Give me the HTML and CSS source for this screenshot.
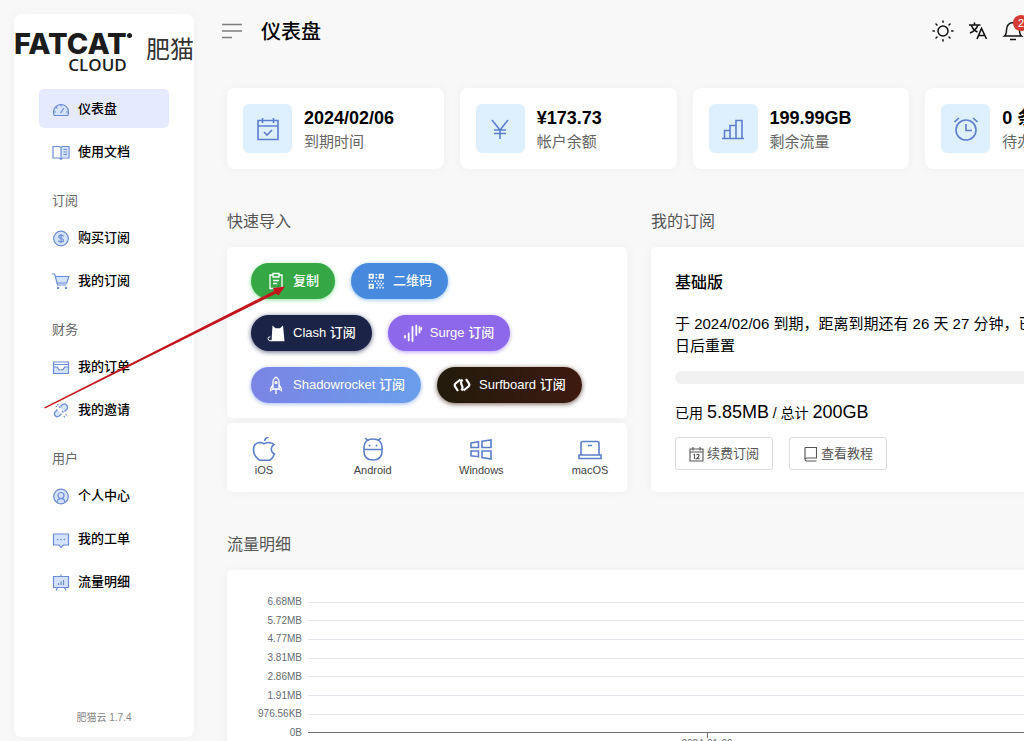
FILE: index.html
```html
<!DOCTYPE html>
<html lang="zh-CN">
<head>
<meta charset="utf-8">
<meta name="viewport" content="width=device-width, initial-scale=1">
<title>仪表盘</title>
<link rel="stylesheet" href="styles.css">
</head>
<body>
<div class="app">
  <aside class="sidebar">
    <div class="logo">
      <div class="logo-mark">
        <span class="logo-top">FATCAT</span>
        <span class="logo-bottom">CLOUD</span>
      </div>
      <span class="logo-cn">肥猫</span>
    </div>
    <nav class="nav">
      <a class="nav-item active" href="#dashboard">
        <svg class="duo" viewBox="0 0 18 18"><path class="f" d="M1.500 15.500V12a7.500 7.500 0 0 1 15 0v3.500z"/><path d="M2.300 15.500Q1.500 14 1.500 12a7.500 7.500 0 0 1 15 0q0 2-.8 3.500zM8.500 13l3.500-5M9 4.500v2M4 7l1.300 1.300M2 12h2M14 12h2"/></svg>
        <span>仪表盘</span></a>
      <a class="nav-item" href="#docs">
        <svg class="duo" viewBox="0 0 18 18"><path class="f" d="M9 4h7.500v10H9z"/><path d="M1 3.500H7.500L9 4.500l1.500-1H17v11.500h-6.500L9 16.500 7.500 15H1zM9 4.500V16.500M11.500 6.500h3.500M11.500 9h3.500M11.500 11.500h3.500"/></svg>
        <span>使用文档</span></a>
      <div class="nav-group">订阅</div>
      <a class="nav-item" href="#buy">
        <svg class="duo" viewBox="0 0 18 18"><circle class="f" cx="9" cy="9.500" r="7.300"/><circle cx="9" cy="9.500" r="7.300"/><path d="M11.500 7.500Q11 6.200 9 6.200T6.600 7.800Q6.600 9.100 9 9.500t2.500 1.800Q11.500 12.900 9 12.900T6.500 11.500M9 5v9"/></svg>
        <span>购买订阅</span></a>
      <a class="nav-item" href="#subs">
        <svg class="duo" viewBox="0 0 18 18"><path class="f" d="M3.500 5H16.500L14.500 12H5.500z"/><path d="M0 2H2.700L5.500 13H14.500M3.500 4.500H16.800L14.800 11H5"/><circle class="dot" cx="6" cy="16" r="1.200"/><circle class="dot" cx="14" cy="16" r="1.200"/></svg>
        <span>我的订阅</span></a>
      <div class="nav-group">财务</div>
      <a class="nav-item" href="#orders">
        <svg class="duo" viewBox="0 0 18 18"><path class="f" d="M1.500 9H5.500Q6 12 9 12t3.500-3h4v6.500h-15z"/><path d="M1.500 4h15v11.500h-15zM1.500 6.500h15M1.500 9H5.500Q6 12 9 12t3.500-3h4"/></svg>
        <span>我的订单</span></a>
      <a class="nav-item" href="#invite">
        <svg class="duo" viewBox="0 0 18 18"><path class="f" d="M8 6l3-3 4.500 1v3.500l-3 3-2-1zM2.500 12l3-3 4 3.500-2.500 3.500H3.500z"/><path d="M8.500 5.500l2-2q2-1.500 4 .5t.5 4l-2.500 2.500M5.500 8.500L3 11q-1.500 2 .3 3.800t3.800.3L9.500 13M7 5.500l1.500 1.500M10 10l1.500 1.500M3.500 5l1.500.7M5.500 3l.7 1.500M13.500 13.500l1.500.7M12 15l.5 1.700"/></svg>
        <span>我的邀请</span></a>
      <div class="nav-group">用户</div>
      <a class="nav-item" href="#profile">
        <svg class="duo" viewBox="0 0 18 18"><circle class="f" cx="9" cy="9.500" r="7.300"/><circle cx="9" cy="9.500" r="7.300"/><circle cx="9" cy="8.500" r="3"/><path d="M5 15.500Q5.500 11.700 9 11.700T13 15.500"/></svg>
        <span>个人中心</span></a>
      <a class="nav-item" href="#tickets">
        <svg class="duo" viewBox="0 0 18 18"><path class="f" d="M1.500 4h15v11h-5L9 17.500 7 15H1.500z"/><path d="M1.500 4h15v11h-5L9 17.500 7 15H1.500z"/><circle class="dot" cx="5.700" cy="9.500" r=".8"/><circle class="dot" cx="9" cy="9.500" r=".8"/><circle class="dot" cx="12.300" cy="9.500" r=".8"/></svg>
        <span>我的工单</span></a>
      <a class="nav-item" href="#traffic">
        <svg class="duo" viewBox="0 0 18 18"><path class="f" d="M1.500 3.500h15v11h-15z"/><path d="M1.500 3.500h15v11h-15zM9 3.500v-2M5.500 14.500l-1.500 3M12.500 14.500l1.500 3M6.500 12v-2M9 12V8.500M11.500 12V7"/></svg>
        <span>流量明细</span></a>
    </nav>
    <div class="version">肥猫云 1.7.4</div>
  </aside>

  <main class="main">
    <header class="header">
      <button class="icon-btn" type="button" aria-label="菜单">
        <svg width="22" height="22" viewBox="0 0 22 22" fill="none" stroke="#7d7d7d" stroke-width="1.500"><path d="M1 4.500h20M1 11h20M1 17.500h10"/></svg>
      </button>
      <h1>仪表盘</h1>
    </header>

    <section class="stats">
      <article class="stat">
        <span class="stat-icon"><svg viewBox="0 0 24 24"><path d="M2 3.500h20v19H2zM2 9h20M6.500 1v5M17.500 1v5M8 15l3 3 5-5"/></svg></span>
        <div><strong>2024/02/06</strong><p>到期时间</p></div>
      </article>
      <article class="stat">
        <span class="stat-icon"><svg viewBox="0 0 24 24"><path d="M4 3l8 10 8-10M12 13v9M6 13h12M6 16.500h12"/></svg></span>
        <div><strong>¥173.73</strong><p>帐户余额</p></div>
      </article>
      <article class="stat">
        <span class="stat-icon"><svg viewBox="0 0 24 24"><path d="M1 21.500h22M3.500 21.500v-8H9M9 21.500v-13h6M15 21.500v-18h6v18M9 13.500v8M15 8.500v13"/></svg></span>
        <div><strong>199.99GB</strong><p>剩余流量</p></div>
      </article>
      <article class="stat">
        <span class="stat-icon"><svg viewBox="0 0 24 24"><circle cx="12" cy="13" r="10"/><path d="M12 7v6.500h6M.5 5L5 1M23.500 5L19 1"/></svg></span>
        <div><strong>0 条</strong><p>待办</p></div>
      </article>
    </section>

    <div class="columns">
      <section>
        <h2>快速导入</h2>
        <div class="import card">
          <div class="pill-row">
            <button class="pill copy" type="button">
              <svg viewBox="0 0 18 18" fill="none" stroke="#fff" stroke-width="1.300"><path d="M6 3H3v13.500h12V3h-3M6 1.500h6v3.500H6zM6 8.500h6M6 11.500h4"/></svg><span>复制</span></button>
            <button class="pill qr" type="button">
              <svg viewBox="0 0 18 18" fill="none" stroke="#fff" stroke-width="1.600"><path d="M2.500 2.500h3.500v3.500H2.500zM12.500 2.500h3.500v3.500h-3.500zM2.500 12.500h3.500v3.500H2.500z"/><path stroke-dasharray="1.500 1.500" d="M9.300 2v5M1.500 9.300h15M9.300 11.500h7.500M10.800 13.500h6M9.300 15.700h7.500"/></svg><span>二维码</span></button>
          </div>
          <div class="pill-row">
            <button class="pill clash" type="button">
              <svg viewBox="0 0 18 18"><path fill="#fff" d="M5.500 1.500L8.500 4.200h4.500L16 1.500 17.500 17.300H4.500z"/><path fill="none" stroke="#fff" d="M5 16.800Q1 17.500 1 14.500 1 12.800 3.300 12.800"/></svg><span>Clash 订阅</span></button>
            <button class="pill surge" type="button">
              <svg viewBox="0 0 18 18" fill="none" stroke="#fff" stroke-width="1.800" stroke-linecap="round"><path d="M1 12v1.500M4.700 9.500v7M8.500 3v14M12.300 1.500v9.500M15.500 3v5.500M17.500 4v1.500"/></svg><span>Surge 订阅</span></button>
          </div>
          <div class="pill-row">
            <button class="pill rocket" type="button">
              <svg viewBox="0 0 18 18" fill="none" stroke="#fff" stroke-width="1.300"><path d="M6 13V6q0-3 3-5 3 2 3 5v7zM6 8.500L3.500 13v1.500L6 13M12 8.500l2.500 4.500v1.500L12 13M9 13v5"/><circle cx="9" cy="6.500" r="1"/></svg><span>Shadowrocket 订阅</span></button>
            <button class="pill surfboard" type="button">
              <svg viewBox="0 0 18 18" fill="none" stroke="#fff" stroke-width="2.600"><path d="M7.500 3.500L2.500 7.500Q1 9 2.300 10.900L5 15M10.500 14.500l5-4q1.500-1.500.2-3.400L13 3M9.500 3.500Q7 6 8.700 9T8.500 14.500" stroke-width="2.200"/></svg><span>Surfboard 订阅</span></button>
          </div>
        </div>
        <div class="platforms card">
          <a href="#ios"><svg viewBox="0 0 24 24"><path d="M22 7.500q-3.500 2.500-2.500 6 .5 2.500 3 3.500-1.500 4-4.500 6.200H7.500Q1.500 19 1.500 12.500 1.800 6 7.500 5.500q2 0 4.500 1.200Q15 5.500 17 5.500q3.500.3 5 2zM12.500 4q.5-3 4-4"/></svg>iOS</a>
          <a href="#android"><svg viewBox="0 0 24 24"><path d="M3 12.500V10Q3.500 2 12 2t9 8v5q-.5 8-9 8t-9-8zM3 12.500h18M4 1l3 2.500M20 1l-3 2.500"/><circle class="eye" cx="8.500" cy="8.500" r="1"/><circle class="eye" cx="15.500" cy="8.500" r="1"/></svg>Android</a>
          <a href="#windows"><svg viewBox="0 0 24 24"><path d="M2 6l7.500-1.200v5.700H2zM13 4.200L22 3v7.500h-9zM2 14h7.500v5.700L2 18.800zM13 14h9v8l-9-1.500z"/></svg>Windows</a>
          <a href="#macos"><svg viewBox="0 0 24 24"><path d="M3 18V6q0-1.500 1.500-1.500h15q1.500 0 1.500 1.500v12M1 18h22v3.500H1zM10 8.500h4"/></svg>macOS</a>
        </div>
      </section>

      <section>
        <h2>我的订阅</h2>
        <div class="plan card">
          <h3>基础版</h3>
          <p class="plan-text">于 2024/02/06 到期，距离到期还有 26 天 27 分钟，已<br>日后重置</p>
          <div class="bar" role="progressbar" aria-label="已用流量" aria-valuenow="0" aria-valuemin="0" aria-valuemax="100"></div>
          <p class="usage">已用 <span>5.85MB</span> / 总计 <span>200GB</span></p>
          <div class="plan-actions">
            <button type="button"><svg viewBox="0 0 15 16"><path d="M1 3h13v12H1zM1 6h13M4 1v3.500M11 1v3.500M4.500 9l1-.5V13M7.500 9q2-1.500 2.500 0T7.500 12.700h3"/></svg><span>续费订阅</span></button>
            <button type="button"><svg viewBox="0 0 15 16"><path d="M2 1.500H13.500V12H3.500Q2 12 2 13.300T3.500 15H13.500M2 13.500V1.500"/></svg><span>查看教程</span></button>
          </div>
        </div>
      </section>
    </div>

    <section>
      <h2>流量明细</h2>
      <div class="chart card">
        <div class="axis">
          <div class="tick"><span>6.68MB</span></div>
          <div class="tick"><span>5.72MB</span></div>
          <div class="tick"><span>4.77MB</span></div>
          <div class="tick"><span>3.81MB</span></div>
          <div class="tick"><span>2.86MB</span></div>
          <div class="tick"><span>1.91MB</span></div>
          <div class="tick"><span>976.56KB</span></div>
          <div class="tick base"><span>0B</span></div>
        </div>
        <div class="dates"><span>2024-01-09</span></div>
      </div>
    </section>
  </main>

  <div class="tools">
    <button class="icon-btn" type="button" aria-label="主题">
      <svg width="22" height="22" viewBox="0 0 22 22" fill="none" stroke="#111" stroke-width="1.500"><circle cx="11" cy="11" r="5"/><path stroke-linecap="round" d="M11 1v1.300M11 19.700V21M1 11h1.300M19.700 11H21M4 4l1 1M17 17l1 1M4 18l1-1M17 5l1-1"/></svg>
    </button>
    <button class="icon-btn" type="button" aria-label="语言">
      <svg width="22" height="22" viewBox="0 0 22 22" fill="none" stroke="#111" stroke-width="1.600"><path d="M2 5h11.500M7.500 2.500V5M11 5Q9 10.500 3 13M4.500 5.500Q6 10 10.500 12M10 19l4.500-10.500L19.500 19M11.500 15.500h6.500"/></svg>
    </button>
    <button class="icon-btn bell" type="button" aria-label="通知">
      <svg width="22" height="22" viewBox="0 0 22 22" fill="none" stroke="#111" stroke-width="1.500"><path d="M2.500 16h17Q17.500 14.500 17.500 9.500 17 3 11 2.500 5 3 4.500 9.500 4.500 14.500 2.500 16zM8 19.500h6"/></svg>
      <span class="badge">2</span>
    </button>
  </div>

  <svg class="pointer" width="244" height="124" viewBox="0 0 244 124" aria-hidden="true"><path fill="#c1161d" d="M0 121.400L230 5 229 2 241 0.500 234.500 9.500 232 7.600 1 122.600z"/></svg>
</div>
</body>
</html>
```
FILE: styles.css
```css
* {
  box-sizing: border-box;
}

body {
  margin: 0;
  background: #f8f8f8;
  color: #000;
  font-family: "Liberation Sans", "Noto Sans CJK SC", sans-serif;
  font-size: 13px;
  overflow: hidden;
}

h1, h2, h3, p {
  margin: 0;
}

button {
  font: inherit;
  cursor: pointer;
}

a {
  color: inherit;
  text-decoration: none;
}

.app {
  position: relative;
  display: flex;
  gap: 33px;
  height: 100vh;
  padding-left: 14px;
  overflow: hidden;
}

.card,
.stat,
.sidebar {
  background: #fff;
  box-shadow: 0 0 12px rgba(0, 0, 0, 0.04);
}

/* Sidebar */
.sidebar {
  display: flex;
  flex: 0 0 180px;
  flex-direction: column;
  margin: 14px 0 4px;
  border-radius: 8px;
}

.logo {
  display: flex;
  align-items: flex-start;
  justify-content: space-between;
  height: 75px;
  padding-top: 17px;
  color: #1c1c1c;
}

.logo-mark {
  position: relative;
  display: flex;
  flex-direction: column;
}

.logo-mark::after {
  position: absolute;
  top: 2px;
  right: -5px;
  width: 5px;
  height: 5px;
  border-radius: 50%;
  background: #1c1c1c;
  content: "";
}

.logo-top {
  font-family: Inter, sans-serif;
  font-size: 29px;
  font-weight: 800;
  line-height: 26px;
}

.logo-bottom {
  align-self: flex-end;
  font-family: "Open Sans", sans-serif;
  font-size: 17px;
  font-weight: 600;
  line-height: 16px;
}

.logo-cn {
  color: #333;
  font-size: 24px;
  line-height: 38px;
}

.nav {
  display: flex;
  flex: 1;
  flex-direction: column;
  gap: 4px;
  padding: 0 25px;
}

.nav-item {
  display: flex;
  align-items: center;
  gap: 8px;
  height: 39px;
  padding-left: 13px;
  border-radius: 5px;
  font-weight: 500;
}

.nav-item span,
.pill span,
.plan-actions span {
  padding-bottom: 3px;
}

.nav-item.active {
  background: #e6eafe;
}

.nav-group {
  height: 39px;
  padding: 16px 0 0 13px;
  color: #666;
  line-height: 20px;
}

.duo {
  width: 18px;
  height: 18px;
  fill: none;
  stroke: #6c8cd4;
  stroke-width: 1.2;
}

.duo .f {
  fill: #d5e2fc;
  stroke: none;
}

.duo .dot {
  fill: #6c8cd4;
  stroke: none;
}

.version {
  padding-bottom: 11px;
  color: #888;
  font-size: 10px;
  line-height: 16px;
  text-align: center;
}

/* The content column runs past the right edge of the window */
.main {
  flex: 1;
  min-width: 0;
  margin-right: -118px;
}

.header {
  display: flex;
  align-items: center;
  gap: 18px;
  height: 62px;
  margin: 0 0 26px -6px;
}

.header h1 {
  padding-bottom: 2px;
  font-size: 20px;
  font-weight: 500;
}

.icon-btn {
  display: flex;
  padding: 0;
  border: 0;
  background: none;
}

.tools {
  position: absolute;
  top: 20px;
  right: 0;
  display: flex;
  gap: 13px;
}

.bell {
  position: relative;
}

.badge {
  position: absolute;
  top: -5px;
  left: 11px;
  width: 16px;
  height: 16px;
  border-radius: 8px;
  background: #d63a34;
  color: #fff;
  font-size: 11px;
  line-height: 16px;
  text-align: center;
}

/* Summary cards */
.stats {
  display: grid;
  grid-template-columns: repeat(4, minmax(0, 1fr));
  gap: 16px;
}

.stat {
  display: flex;
  align-items: center;
  gap: 12px;
  padding: 16px;
  border-radius: 8px;
}

.stat-icon {
  display: flex;
  align-items: center;
  justify-content: center;
  width: 49px;
  height: 49px;
  border-radius: 6px;
  background: #def0fd;
}

.stat-icon svg,
.platforms svg {
  width: 24px;
  height: 24px;
  fill: none;
  stroke: #5d7ecb;
  stroke-width: 1.6;
}

.stat strong {
  display: block;
  font-size: 18px;
  line-height: 26px;
}

.stat p {
  color: #666;
  font-size: 15px;
  line-height: 22px;
}

h2 {
  margin: 41px 0 13px;
  color: #555;
  font-size: 16px;
  font-weight: 400;
  line-height: 24px;
}

.columns {
  display: grid;
  grid-template-columns: minmax(0, 400fr) minmax(0, 491fr);
  gap: 24px;
}

.columns > section {
  display: flex;
  flex-direction: column;
}

.card {
  border-radius: 5px;
}

/* Quick import */
.import {
  display: flex;
  flex-direction: column;
  gap: 16px;
  padding: 16px 24px 15px;
}

.pill-row {
  display: flex;
  gap: 16px;
}

.pill {
  display: flex;
  align-items: center;
  gap: 8px;
  height: 36px;
  padding: 0 16px;
  border: 0;
  border-radius: 18px;
  color: #fff;
  font-weight: 500;
}

.pill svg {
  width: 18px;
  height: 18px;
}

.copy {
  background: #35a745;
  box-shadow: 0 1px 4px #8be29a;
}

.qr {
  background: #4789dc;
  box-shadow: 0 1px 4px #8fc0f8;
}

.clash {
  background: #1b2346;
  box-shadow: 0 1px 5px #5a6180;
}

.surge {
  background: #8d68ea;
  box-shadow: 0 1px 4px #b79ef8;
}

.rocket {
  background: linear-gradient(90deg, #7b84e4, #6a9eeb);
  box-shadow: 0 1px 4px #9eb8f5;
}

.surfboard {
  background: linear-gradient(90deg, #221b0b, #3d1a10);
  box-shadow: 0 1px 5px #70584f;
}

.platforms {
  display: flex;
  justify-content: space-between;
  margin-top: 5px;
  padding: 14px 8px 13px;
}

.platforms a {
  display: flex;
  flex-direction: column;
  align-items: center;
  gap: 1px;
  width: 58px;
  color: #444;
  font-size: 11px;
  line-height: 17px;
}

.platforms .eye {
  fill: #5d7ecb;
  stroke: none;
}

/* Current plan */
.plan {
  flex: 1;
  padding: 24px 24px 20px;
}

.plan h3 {
  font-size: 16px;
  font-weight: 500;
  line-height: 24px;
}

.plan-text {
  margin-top: 18px;
  font-size: 15px;
  line-height: 22px;
}

.bar {
  height: 13px;
  margin-top: 14px;
  border-radius: 7px;
  background: #f0f0f0;
}

.usage {
  margin-top: 16px;
  font-size: 14px;
  line-height: 24px;
}

.usage span {
  font-size: 18px;
}

.plan-actions {
  display: flex;
  gap: 16px;
  margin-top: 12px;
}

.plan-actions button {
  display: flex;
  align-items: center;
  gap: 3px;
  height: 33px;
  padding: 0 13px;
  border: 1px solid #dcdcdc;
  border-radius: 3px;
  background: #fff;
  color: #555;
}

.plan-actions svg {
  width: 15px;
  height: 16px;
  fill: none;
  stroke: #555;
  stroke-width: 1.1;
}

/* Traffic chart */
.chart {
  padding: 23px 36px 24px 24px;
}

.axis {
  display: flex;
  flex-direction: column;
  justify-content: space-between;
  height: 149px;
}

.tick {
  display: flex;
  align-items: center;
  gap: 6px;
  color: #666b73;
  font-size: 10px;
  line-height: 18px;
}

.tick span {
  width: 51px;
  text-align: right;
}

.tick::after {
  flex: 1;
  height: 1px;
  background: #e3e5ea;
  content: "";
}

.tick.base::after {
  background: #6e7079;
}

.dates {
  display: flex;
  flex-direction: column;
  align-items: center;
  margin: -9px 0 0 57px;
  color: #666b73;
  font-size: 10px;
  line-height: 12px;
}

.dates::before {
  width: 1px;
  height: 5px;
  background: #6e7079;
  content: "";
}

/* Annotation arrow lying over the page */
.pointer {
  position: absolute;
  top: 286px;
  left: 44px;
  pointer-events: none;
}
```
